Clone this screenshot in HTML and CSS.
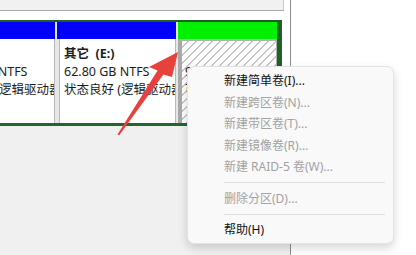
FILE: index.html
```html
<!DOCTYPE html>
<html lang="zh-CN">
<head>
<meta charset="utf-8">
<link rel="stylesheet" href="styles.css">
</head>
<body>
<div class="screen">
  <div class="pane">
    <div class="prevrow"></div>
    <div class="spacer"></div>
    <div class="ext">
      <div class="part p1">
        <div class="bar blue"></div>
        <div class="body">
          <div class="line">&nbsp;</div>
          <div class="line">20.00 GB NTFS</div>
          <div class="line">状态良好 (逻辑驱动器)</div>
        </div>
      </div>
      <div class="part p2">
        <div class="bar blue"></div>
        <div class="body inset">
          <div class="line name">其它&nbsp; (E:)</div>
          <div class="line">62.80 GB NTFS</div>
          <div class="line">状态良好 (逻辑驱动器)</div>
        </div>
      </div>
      <div class="part p3">
        <div class="bar green"></div>
        <div class="body hatch">
          <div class="line">&nbsp;</div>
          <div class="line">9.37 GB</div>
          <div class="line">可用空间</div>
        </div>
      </div>
    </div>
    <div class="below"></div>
  </div>
  <div class="side"></div>

  <svg class="arrow" width="416" height="255" viewBox="0 0 416 255">
    <polygon points="178,52 149,67 157.6,70.6 117.5,134.5 119.2,135.2 163.4,74.4 172,77" fill="#e8403a"/>
  </svg>

  <div class="menu">
    <div class="item">新建简单卷(I)...</div>
    <div class="item off">新建跨区卷(N)...</div>
    <div class="item off">新建带区卷(T)...</div>
    <div class="item off">新建镜像卷(R)...</div>
    <div class="item off">新建 RAID-5 卷(W)...</div>
    <div class="sep"></div>
    <div class="item off">删除分区(D)...</div>
    <div class="sep"></div>
    <div class="item">帮助(H)</div>
  </div>
</div>
</body>
</html>
```

FILE: styles.css
```css
html, body {
  margin: 0;
  padding: 0;
}
body {
  width: 416px;
  height: 255px;
  overflow: hidden;
  font-family: "Noto Sans", "Noto Sans CJK SC", sans-serif;
  font-size: 12px;
  color: #1a1a1a;
  background: #ffffff;
}
.screen {
  position: relative;
  display: flex;
  width: 416px;
  height: 255px;
  overflow: hidden;
}
.pane {
  width: 290px;
  height: 255px;
  border-right: 1px solid #8e8e8e;
  background: #ffffff;
  display: flex;
  flex-direction: column;
  overflow: hidden;
}
.prevrow {
  width: 283px;
  height: 10px;
  background: #f1f1f1;
  border-bottom: 1px solid #a8a8a8;
  border-right: 1px solid #c8c8c8;
  flex: none;
}
.spacer {
  height: 9px;
  flex: none;
}
.ext {
  flex: none;
  display: flex;
  gap: 2px;
  margin-left: -61px;
  width: 338px;
  height: 101px;
  border-top: 2px solid #1f5f24;
  border-bottom: 3px solid #22662a;
  border-right: 5px solid #1f6324;
  background: #e6e6e6;
}
.part {
  display: flex;
  flex-direction: column;
}
.p1 { width: 116px; }
.p2 { width: 119px; }
.p3 { flex: 1; min-width: 0; }
.bar {
  height: 17px;
  flex: none;
}
.blue { background: #0000f8; }
.green { background: #00f000; }
.body {
  flex: 1;
  background: #ffffff;
  border-right: 1px solid #b9b9b9;
  padding: 6px 0 0 3px;
  white-space: nowrap;
  overflow: hidden;
}
.body.inset {
  border-left: 1px solid #b9b9b9;
  margin-left: 2px;
  padding-left: 4px;
}
.line {
  height: 18px;
  line-height: 18px;
  font-size: 12.5px;
  color: #1c1c1c;
}
.name {
  font-weight: bold;
}
.hatch {
  border-left: 4px solid #a9a9a9;
  border-top: 2px solid #b0b0b0;
  border-right: 1px solid #b0b0b0;
  padding: 4px 0 0 3px;
  background: repeating-linear-gradient(135deg, #ffffff 0px, #ffffff 4.2px, #c6c6c6 4.2px, #c6c6c6 5.6px);
}
.below {
  flex: 1;
  background: #f0f0f0;
}
.side {
  flex: 1;
  background: #ffffff;
}
.arrow {
  position: absolute;
  left: 0;
  top: 0;
  pointer-events: none;
}
.menu {
  position: absolute;
  left: 187px;
  top: 66px;
  width: 207px;
  box-sizing: border-box;
  padding: 3px 0 2px 0;
  background: #f9f9f9;
  border: 1px solid #e3e3e3;
  border-radius: 7px;
  box-shadow: 0 4px 10px rgba(0, 0, 0, 0.16);
}
.item {
  height: 21.5px;
  line-height: 21.5px;
  padding-left: 36px;
  font-size: 12px;
  color: #111111;
  white-space: nowrap;
}
.item.off {
  color: #a2a2a2;
}
.sep {
  height: 10px;
  margin: 0 8px 0 36px;
  background: linear-gradient(#e0e0e0, #e0e0e0) no-repeat center / 100% 1px;
}
```
